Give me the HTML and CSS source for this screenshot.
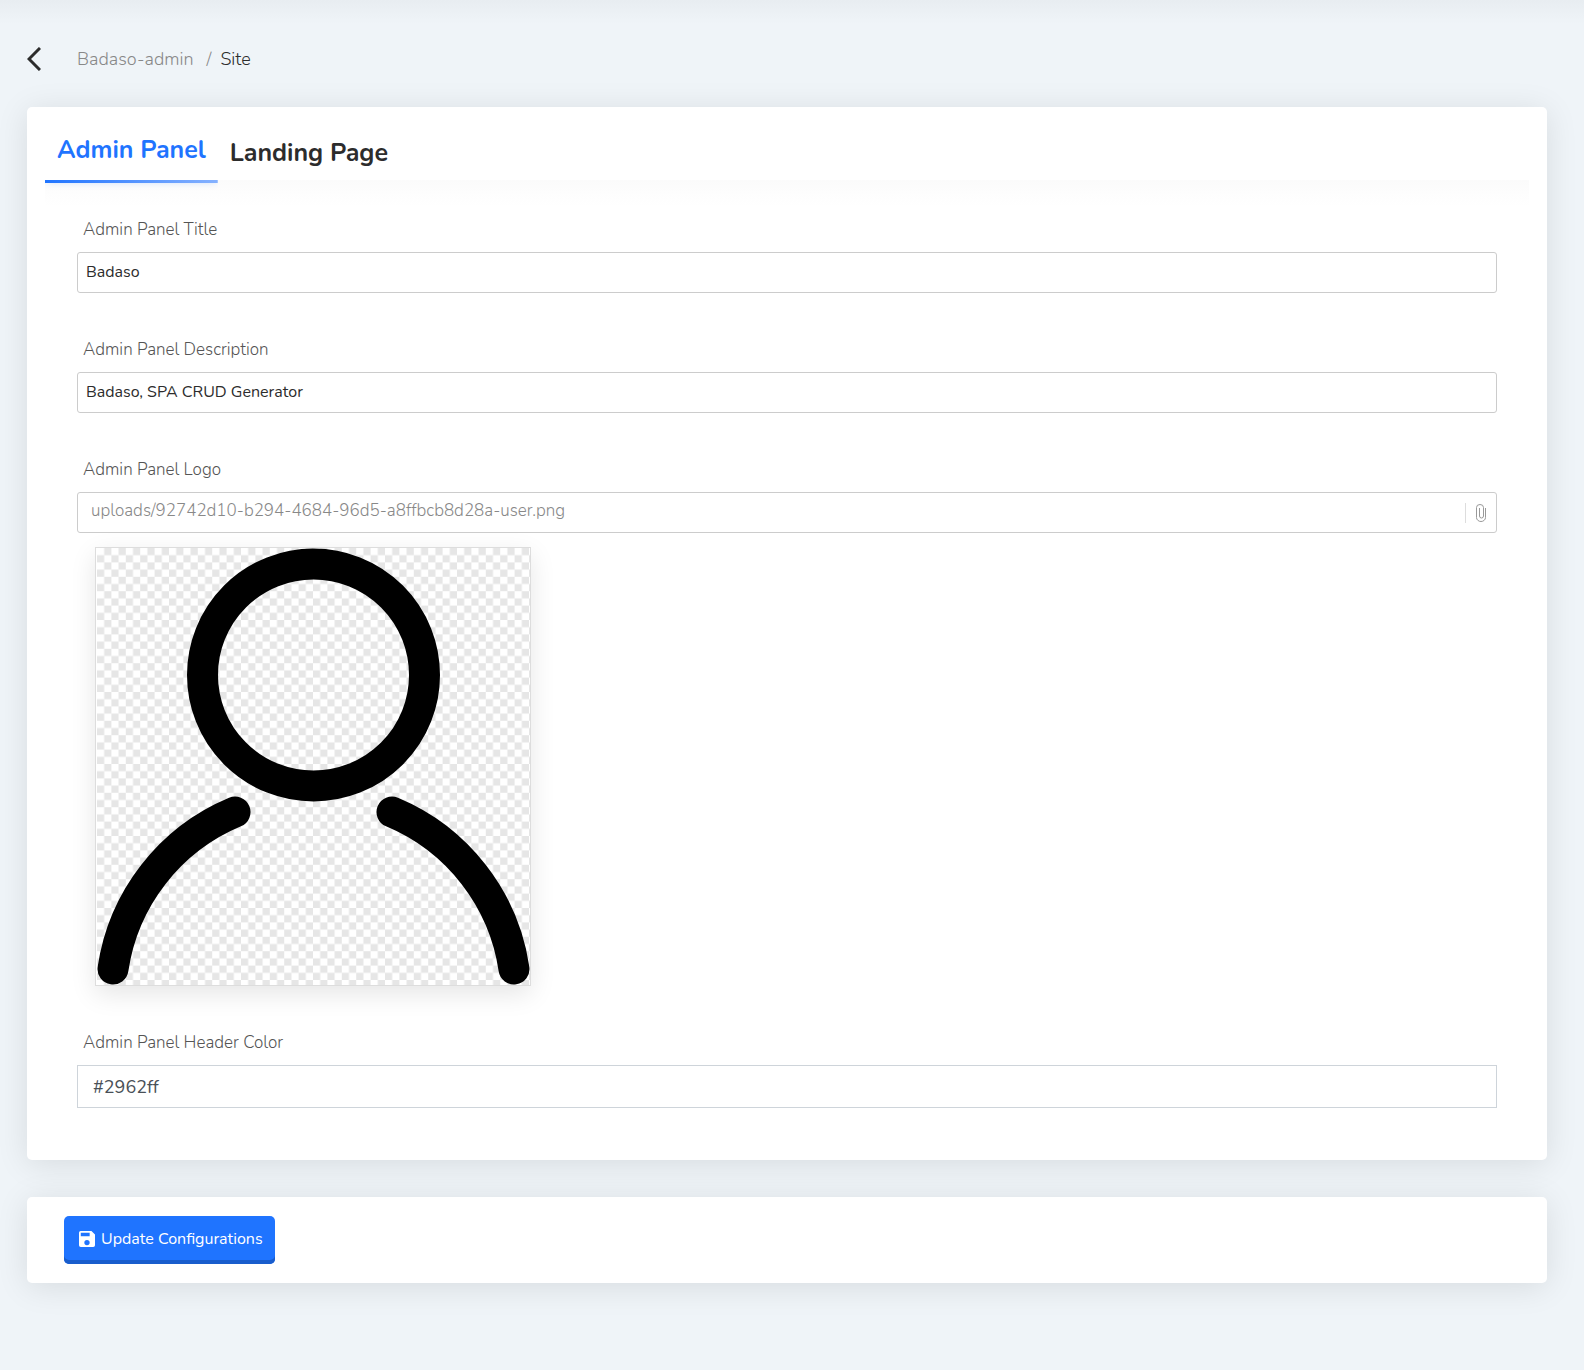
FILE: index.html
```html
<!DOCTYPE html>
<html lang="en">
<head>
<meta charset="utf-8">
<meta name="viewport" content="width=device-width, initial-scale=1">
<title>Site - Badaso</title>
<link rel="stylesheet" href="styles.css">
</head>
<body>
<main class="page">
  <header class="topbar">
    <button class="back" type="button" aria-label="Back">
      <svg width="14" height="24" viewBox="0 0 14 24" fill="none" stroke="#2c2c2c" stroke-width="3"><path d="M13 1 2 12 13 23"/></svg>
    </button>
    <nav class="breadcrumb" aria-label="Breadcrumb">
      <a href="#">Badaso-admin</a>
      <span class="separator">/</span>
      <span class="current">Site</span>
    </nav>
  </header>

  <section class="card">
    <div class="tabs" role="tablist">
      <button class="tab tab-active" type="button" role="tab" aria-selected="true">Admin Panel</button>
      <button class="tab" type="button" role="tab" aria-selected="false">Landing Page</button>
    </div>
    <form class="fields" id="config">
      <div class="field">
        <label for="title">Admin Panel Title</label>
        <input class="input" id="title" type="text" value="Badaso">
      </div>
      <div class="field">
        <label for="description">Admin Panel Description</label>
        <input class="input" id="description" type="text" value="Badaso, SPA CRUD Generator">
      </div>
      <div class="field">
        <label for="logo">Admin Panel Logo</label>
        <div class="file">
          <input class="file-name" id="logo" type="text" readonly value="uploads/92742d10-b294-4684-96d5-a8ffbcb8d28a-user.png">
          <button class="attach" type="button" aria-label="Choose file">
            <svg width="10" height="18" viewBox="0 0 10 18" fill="none" stroke="#999" stroke-width="1"><path d="M9.500 4v9.500a4.500 4 0 0 1-9 0V3.500a3.500 3 0 0 1 7 0V12a2 2 0 0 1-4 0V4"/></svg>
          </button>
        </div>
        <div class="preview">
          <svg width="433" height="437" viewBox="0 0 433 437" role="img" aria-label="Logo preview">
            <defs>
              <pattern id="checker" width="14.4" height="14.4" patternUnits="userSpaceOnUse">
                <path fill="#e6e6e6" d="M7.200 0h7.200v7.200H7.200zM0 7.200h7.200v7.200H0z"/>
              </pattern>
            </defs>
            <rect width="433" height="437" fill="url(#checker)"/>
            <g fill="none" stroke="#000" stroke-width="31" stroke-linecap="round">
              <circle cx="216.500" cy="127" r="111"/>
              <path d="M16 421A202 202 0 0 1 138 264M417 421A202 202 0 0 0 295 264"/>
            </g>
          </svg>
        </div>
      </div>
      <div class="field">
        <label for="color">Admin Panel Header Color</label>
        <input class="input input-color" id="color" type="text" value="#2962ff">
      </div>
    </form>
  </section>

  <section class="card actions">
    <button class="submit" type="submit" form="config">
      <svg width="16" height="16" viewBox="3 3 18 18" fill="#fff"><path d="M15 9H5V5h10m-3 14a3 3 0 0 1-3-3 3 3 0 0 1 3-3 3 3 0 0 1 3 3 3 3 0 0 1-3 3m5-16H5a2 2 0 0 0-2 2v14a2 2 0 0 0 2 2h14a2 2 0 0 0 2-2V7l-4-4z"/></svg>
      Update Configurations
    </button>
  </section>
</main>
</body>
</html>
```
FILE: styles.css
```css
* { box-sizing: border-box; }

body {
  margin: 0;
  min-height: 100vh;
  background: #eff4f8 linear-gradient(#e8edf1, #eff4f8) 0 0 / 100% 24px no-repeat;
  color: #2c2c2c;
  font-family: Nunito, Lato, "Open Sans", sans-serif;
  font-size: 17px;
  line-height: 24px;
}

button, input { font: inherit; color: inherit; }
button { border: 0; padding: 0; background: none; cursor: pointer; }
svg { display: block; }

.page { padding: 47px 37px 87px 27px; }

.topbar { display: flex; align-items: center; gap: 36px; height: 24px; margin-bottom: 36px; }
.breadcrumb { display: flex; gap: 9px; font-size: 18px; font-weight: 300; }
.breadcrumb a { margin-right: 4px; color: #888; text-decoration: none; }
.separator { color: #888; }

.card {
  border-radius: 5px;
  background: #fff;
  box-shadow: 0 4px 32px rgba(0, 0, 0, 0.1);
}

.tabs { display: flex; height: 73px; margin: 0 18px; padding-top: 16px; }
.tab { height: 60px; padding: 0 12px; font-size: 25px; font-weight: 700; line-height: 32px; }
.tab-active {
  position: relative;
  padding-bottom: 4px;
  border-bottom: 3px solid;
  border-image: linear-gradient(90deg, #1f74ff, #86b2ff) 1;
  color: #1f74ff;
  box-shadow: 0 0 8px -2px rgba(31, 116, 255, 0.3);
  clip-path: inset(0 0 -12px 0);
}

.fields {
  display: flex;
  flex-direction: column;
  gap: 45px;
  padding: 38px 50px 52px;
  background: linear-gradient(#fbfbfb, #fff) 18px 0 / calc(100% - 36px) 26px no-repeat;
}
.field label { display: block; margin: 0 6px 10px; color: #555; font-size: 17px; font-weight: 300; }

.input, .file {
  display: block;
  width: 100%;
  height: 41px;
  border: 1px solid #ccc;
  border-radius: 3px;
  background: #fff;
}
.input { padding: 0 8px 2px; font-size: 16px; }
.input-color { height: 43px; padding: 0 15px; border-color: #ced4da; border-radius: 0; color: #495057; font-size: 18px; }

.file { display: flex; align-items: center; }
.file-name { flex: 1; min-width: 0; padding: 0 13px 3px; border: 0; outline: 0; background: none; color: #888; font-size: 17px; font-weight: 300; }
.attach { display: flex; align-items: center; width: 31px; height: 20px; padding-left: 10px; border-left: 1px solid #ddd; }

.preview {
  width: fit-content;
  margin: 14px 18px 0;
  padding-left: 1px;
  border: 1px solid #ddd;
  background: #fff;
  box-shadow: 0 8px 24px rgba(0, 0, 0, 0.1);
}

.actions { margin-top: 37px; padding: 19px 37px; }
.submit {
  display: flex;
  align-items: center;
  gap: 6px;
  height: 48px;
  padding: 0 12px 2px 15px;
  border-radius: 5px;
  background: #1f74ff;
  box-shadow: inset 0 -4px #195dcc;
  color: #fff;
  font-size: 16px;
}
```
